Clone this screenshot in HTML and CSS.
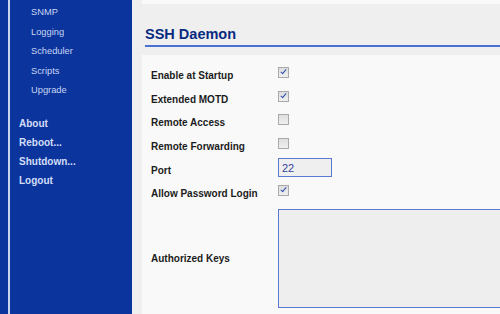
FILE: index.html
```html
<!DOCTYPE html>
<html lang="en">
<head>
    <meta charset="UTF-8">
    <title>SSH Daemon</title>
    <link rel="stylesheet" href="styles.css">
</head>
<body>
    <div class="sidebar">
        <div class="nav">
            <a class="sub" href="#">SNMP</a>
            <a class="sub" href="#">Logging</a>
            <a class="sub" href="#">Scheduler</a>
            <a class="sub" href="#">Scripts</a>
            <a class="sub" href="#">Upgrade</a>
            <a class="top first" href="#">About</a>
            <a class="top" href="#">Reboot...</a>
            <a class="top" href="#">Shutdown...</a>
            <a class="top" href="#">Logout</a>
        </div>
    </div>
    <div class="main">
        <div class="section-end"></div>
        <h2 class="title">SSH Daemon</h2>
        <div class="section">
            <div class="row">
                <span class="label">Enable at Startup</span>
                <span class="check on"></span>
            </div>
            <div class="row">
                <span class="label">Extended MOTD</span>
                <span class="check on"></span>
            </div>
            <div class="row">
                <span class="label">Remote Access</span>
                <span class="check"></span>
            </div>
            <div class="row">
                <span class="label">Remote Forwarding</span>
                <span class="check"></span>
            </div>
            <div class="row">
                <span class="label">Port</span>
                <input class="text" type="text" value="22">
            </div>
            <div class="row">
                <span class="label">Allow Password Login</span>
                <span class="check on"></span>
            </div>
            <div class="row tall">
                <span class="label">Authorized Keys</span>
                <textarea class="keys"></textarea>
            </div>
        </div>
    </div>
</body>
</html>
```

FILE: styles.css
```css
html {
    overflow: hidden;
}

body {
    margin: 0;
    display: flex;
    height: 314px;
    overflow: hidden;
    background-color: #efefef;
    font-family: 'Liberation Sans', Arial, sans-serif;
}

.sidebar {
    width: 132px;
    flex-shrink: 0;
    background-color: #0b359c;
}

.nav {
    display: flex;
    flex-direction: column;
    margin-left: 8px;
    padding-top: 3px;
    height: 311px;
    border-left: 2px solid #c9d3f0;
}

.nav a {
    display: block;
    line-height: 19.5px;
    text-decoration: none;
}

.nav .sub {
    padding-left: 21px;
    font-size: 9.3px;
    color: #c8d4f4;
}

.nav .top {
    padding-left: 9px;
    font-size: 10px;
    font-weight: bold;
    line-height: 19.3px;
    color: #d3ddf8;
}

.nav .first {
    margin-top: 13px;
}

.main {
    flex-shrink: 0;
    width: 380px;
    height: 314px;
    padding-left: 10px;
    overflow: hidden;
}

.section-end {
    height: 4px;
    background-color: #f9f9f9;
}

.title {
    margin: 22px 0 8px 3px;
    padding-bottom: 2px;
    font-size: 14.5px;
    line-height: 17px;
    color: #072a80;
    border-bottom: 2px solid #4b70d4;
}

.section {
    background-color: #f9f9f9;
    padding-top: 9px;
    height: 300px;
}

.row {
    display: flex;
    align-items: center;
    height: 23.6px;
}

.label {
    width: 136px;
    flex-shrink: 0;
    padding-left: 9px;
    box-sizing: border-box;
    font-size: 10px;
    font-weight: bold;
    color: #1c1c1c;
}

.check {
    align-self: flex-start;
    margin-top: 3px;
    width: 11px;
    height: 11px;
    box-sizing: border-box;
    border: 1px solid #a9a9a9;
    background: linear-gradient(#dedede, #f0f0f0);
    position: relative;
}

.check.on::after {
    content: '';
    position: absolute;
    left: 3px;
    top: 0px;
    width: 2px;
    height: 5px;
    border-right: 1.5px solid #2b4ea8;
    border-bottom: 1.5px solid #2b4ea8;
    transform: rotate(40deg);
}

.text {
    align-self: flex-start;
    width: 54px;
    height: 19px;
    box-sizing: border-box;
    margin: 0;
    padding: 0 3px;
    border: 1px solid #5a79d2;
    background-color: #efefef;
    font-family: 'Liberation Sans', Arial, sans-serif;
    font-size: 11px;
    color: #33449a;
    outline: none;
}

.row.tall {
    height: 105px;
}

.keys {
    flex-shrink: 0;
    align-self: flex-start;
    margin: 3px 0 0 0;
    width: 260px;
    height: 99px;
    box-sizing: border-box;
    border: 1px solid #5a79d2;
    background-color: #eeeeee;
    resize: none;
    outline: none;
}
```
